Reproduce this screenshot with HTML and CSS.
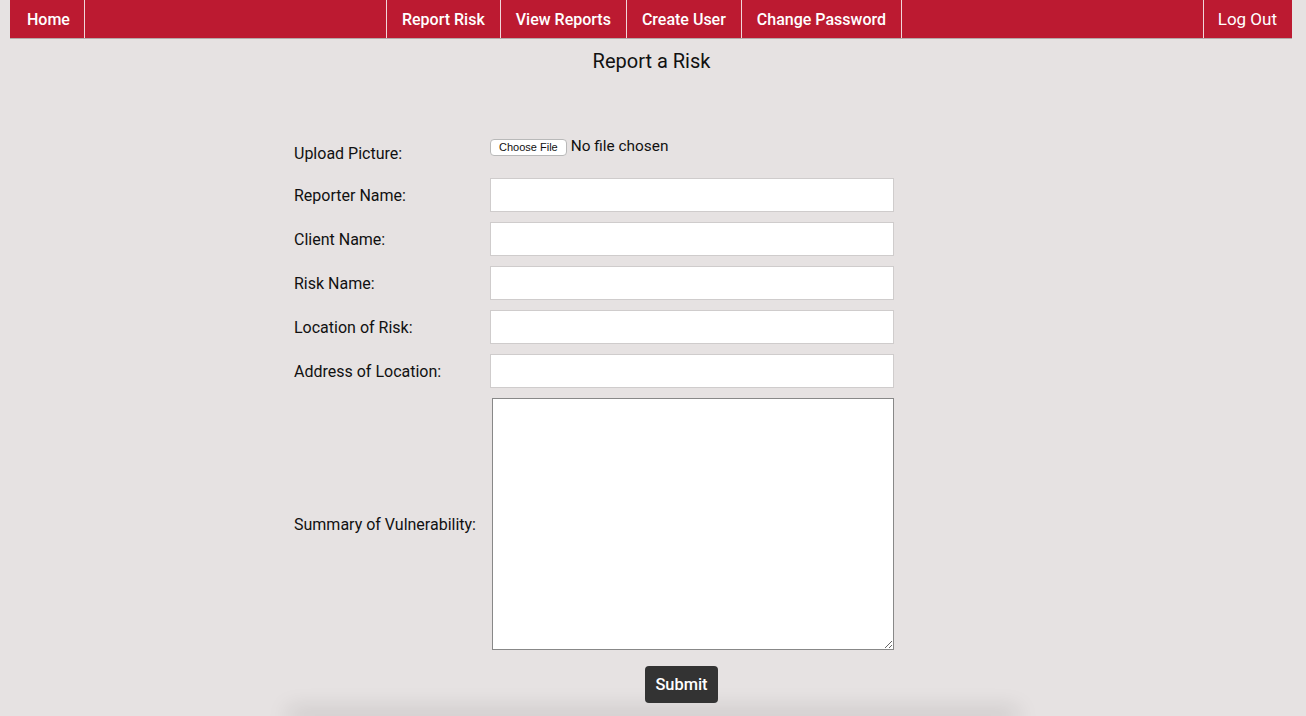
FILE: index.html
```html
<!DOCTYPE html>
<html>
<head>
<meta charset="utf-8">
<link rel="stylesheet" href="styles.css">
</head>
<body>
<nav class="nav">
  <a class="nav-item nav-home" href="#">Home</a>
  <div class="nav-group">
    <a class="nav-item" href="#">Report Risk</a>
    <a class="nav-item" href="#">View Reports</a>
    <a class="nav-item" href="#">Create User</a>
    <a class="nav-item nav-last" href="#">Change Password</a>
  </div>
  <a class="nav-item nav-logout" href="#">Log Out</a>
</nav>
<main class="page">
  <h1 class="title">Report a Risk</h1>
  <form class="form">
    <div class="row row-upload">
      <label class="label">Upload Picture:</label>
      <div class="field"><input class="file" type="file"></div>
    </div>
    <div class="row">
      <label class="label">Reporter Name:</label>
      <input class="text" type="text">
    </div>
    <div class="row">
      <label class="label">Client Name:</label>
      <input class="text" type="text">
    </div>
    <div class="row">
      <label class="label">Risk Name:</label>
      <input class="text" type="text">
    </div>
    <div class="row">
      <label class="label">Location of Risk:</label>
      <input class="text" type="text">
    </div>
    <div class="row">
      <label class="label">Address of Location:</label>
      <input class="text" type="text">
    </div>
    <div class="row row-area">
      <label class="label">Summary of Vulnerability:</label>
      <textarea class="area"></textarea>
    </div>
  </form>
  <div class="actions">
    <button class="submit" type="button">Submit</button>
  </div>
</main>
<div class="below"></div>
</body>
</html>
```
FILE: styles.css
```css
html, body {
  margin: 0;
  padding: 0;
}
body {
  background: #e6e2e2;
  font-family: Roboto, "Liberation Sans", Arial, sans-serif;
  color: #111;
  overflow: hidden;
  height: 716px;
}
.nav {
  display: flex;
  height: 38px;
  margin: 0 14px 0 10px;
  background: #bc1a31;
  box-shadow: 0 1px 0 #b4a9aa;
}
.nav-item {
  display: flex;
  align-items: center;
  height: 38px;
  padding: 0 15px;
  color: #fff;
  text-decoration: none;
  font-size: 16px;
  font-weight: 500;
  box-sizing: border-box;
}
.nav-home {
  padding: 0 14px 0 17px;
  border-right: 1px solid #f1d6da;
}
.nav-group {
  display: flex;
  margin-left: 301px;
}
.nav-group .nav-item {
  border-left: 1px solid #f1d6da;
}
.nav-group .nav-last {
  border-right: 1px solid #f1d6da;
}
.nav-logout {
  margin-left: auto;
  border-left: 1px solid #f1d6da;
  font-size: 17px;
  font-weight: 400;
  padding: 0 15px 0 14px;
}
.page {
  width: 730px;
  margin: 0 auto;
  box-sizing: border-box;
}
.title {
  margin: 0;
  padding: 11px 3px 0 0;
  text-align: center;
  font-size: 20px;
  font-weight: 400;
  line-height: 24px;
}
.form {
  margin: 63px 0 0 6px;
  display: flex;
  flex-direction: column;
  gap: 10px;
}
.row {
  display: grid;
  grid-template-columns: 196px 404px;
  align-items: center;
  min-height: 34px;
}
.row-upload {
  height: 32px;
  margin-bottom: -2px;
  align-items: start;
}
.row-upload .label {
  padding-top: 8px;
}
.label {
  font-size: 16px;
  line-height: 20px;
  padding-top: 2px;
}
.file {
  font-family: Roboto, "Liberation Sans", Arial, sans-serif;
  font-size: 15.4px;
  color: #111;
}
.file::file-selector-button {
  font-family: "Liberation Sans", Arial, sans-serif;
  font-size: 11px;
  background: #fff;
  border: 1px solid #b9b9b9;
  border-radius: 4px;
  padding: 1px 8px;
  margin-right: 4px;
  height: 17px;
  color: #111;
}
.text {
  height: 34px;
  width: 404px;
  box-sizing: border-box;
  border: 1px solid #cfcccc;
  background: #fff;
  margin: 0;
  padding: 0 8px;
  font-size: 15px;
}
.area {
  width: 402px;
  height: 252px;
  box-sizing: border-box;
  margin-left: 2px;
  border: 1px solid #888;
  background: #fff;
  resize: both;
  font-family: Roboto, sans-serif;
}
.actions {
  display: flex;
  justify-content: center;
  margin-top: 16px;
  padding-left: 57px;
}
.submit {
  background: #333;
  color: #fff;
  border: none;
  border-radius: 4px;
  height: 37px;
  padding: 0 10px;
  font-family: Roboto, "Liberation Sans", Arial, sans-serif;
  font-size: 16.4px;
  font-weight: 500;
  line-height: 37px;
}
.below {
  width: 720px;
  height: 0;
  margin: 12px auto 0;
  box-shadow: 0 0 22px 5px rgba(0, 0, 0, 0.18);
}
```
